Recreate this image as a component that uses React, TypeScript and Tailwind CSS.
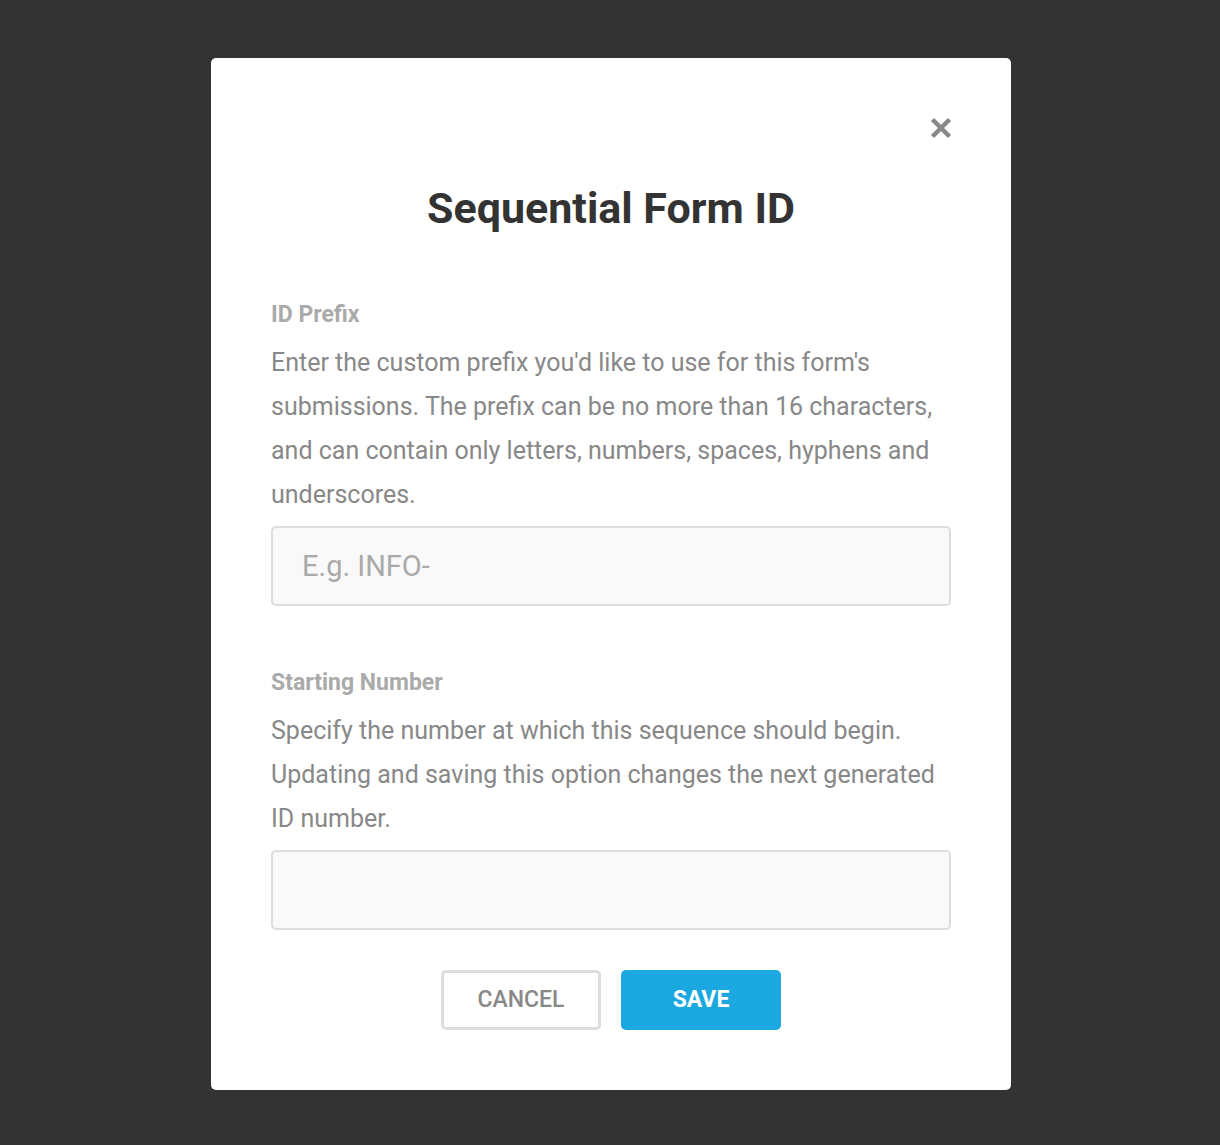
import React from "react";

export default function App() {
  return (
    <div className="min-h-screen bg-[#333333] pt-[58px] pb-[55px] pl-[2px] font-['Roboto',sans-serif]">
      <div className="mx-auto w-[800px] rounded-[5px] bg-white px-[60px] pt-[59px] pb-[60px]">
        {/* close */}
        <div className="flex justify-end -mr-[1px]">
          <button className="h-[22px] w-[22px] text-[#888888]" aria-label="Close">
            <svg viewBox="0 0 22 22" className="h-[22px] w-[22px]">
              <path d="M2.5 2.5 L19.5 19.5 M19.5 2.5 L2.5 19.5" stroke="currentColor" strokeWidth="4.5" strokeLinecap="butt" />
            </svg>
          </button>
        </div>

        <h1 className="mt-[44px] text-center text-[43px] font-bold leading-[50px] text-[#333333]">
          Sequential Form ID
        </h1>

        <div className="mt-[67px]">
          <label className="block text-[23px] font-bold leading-[30px] text-[#aaaaaa]">ID Prefix</label>
          <p className="mt-[11px] text-[25px] leading-[44px] text-[#888888]">
            Enter the custom prefix you'd like to use for this form's submissions. The prefix can be no more
            than 16 characters, and can contain only letters, numbers, spaces, hyphens and underscores.
          </p>
          <input
            type="text"
            placeholder="E.g. INFO-"
            className="mt-[9px] h-[80px] w-full rounded-[5px] border-2 border-[#dddddd] bg-[#f9f9f9] px-[29px] text-[29px] text-[#333333] outline-none placeholder:text-[#aaaaaa]"
          />
        </div>

        <div className="mt-[62px]">
          <label className="block text-[23px] font-bold leading-[30px] text-[#aaaaaa]">Starting Number</label>
          <p className="mt-[11px] text-[25px] leading-[44px] text-[#888888]">
            Specify the number at which this sequence should begin. Updating and saving this option changes
            the next generated ID number.
          </p>
          <input
            type="text"
            className="mt-[9px] h-[80px] w-full rounded-[5px] border-2 border-[#dddddd] bg-[#f9f9f9] px-[29px] text-[29px] text-[#333333] outline-none"
          />
        </div>

        <div className="mt-[40px] flex justify-center gap-[20px]">
          <button className="h-[60px] w-[160px] rounded-[5px] border-[3px] border-[#dddddd] bg-white text-[23px] font-medium text-[#888888]">
            CANCEL
          </button>
          <button className="h-[60px] w-[160px] rounded-[5px] bg-[#1ba8e0] text-[23px] font-bold text-white">
            SAVE
          </button>
        </div>
      </div>
    </div>
  );
}
